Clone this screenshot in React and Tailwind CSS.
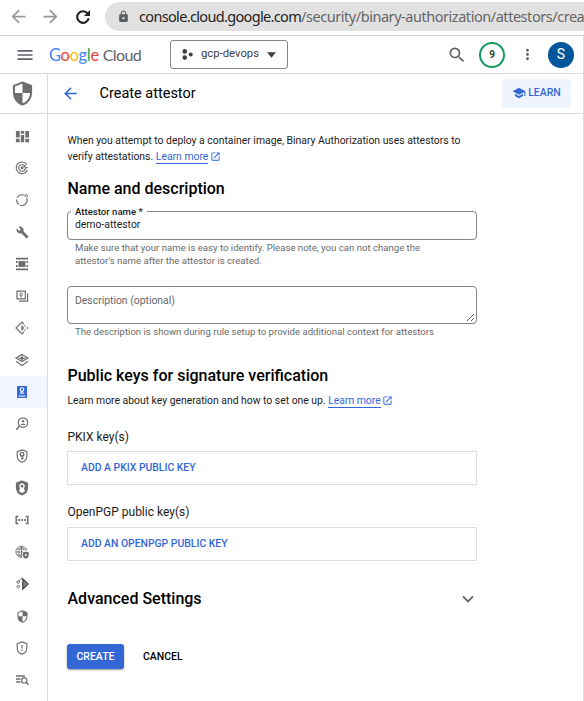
import React from "react";
import {
  MdArrowBack, MdArrowForward, MdLock, MdMenu, MdSearch, MdMoreVert,
  MdSchool, MdOpenInNew, MdBuild,
} from "react-icons/md";

const SHIELD = "M8 1 13.5 3.1V7.6C13.5 11 11.2 14 8 15 4.8 14 2.5 11 2.5 7.6V3.1Z";

function Icon({ children, className = "size-4" }) {
  return (
    <svg viewBox="0 0 16 16" className={className} fill="none" stroke="currentColor" strokeWidth="1.2">
      {children}
    </svg>
  );
}

function HalfShield({ className }) {
  return (
    <Icon className={className}>
      <path d={SHIELD} strokeWidth="1.3" />
      <path d="M8 1 13.5 3.1V7.6H8ZM8 7.6V15C4.8 14 2.5 11 2.5 7.6Z" fill="currentColor" stroke="none" />
    </Icon>
  );
}

const NAV = [
  <Icon key="overview" className="size-[15px]">
    <path d="M1 2h4v7H1zM6.2 2h3.6v3H6.2zM11 2h4v7h-4zM1 10.5h4V14H1zM6.2 6.5h3.6V14H6.2zM11 10.5h4V14h-4z" fill="currentColor" stroke="none" />
  </Icon>,
  <Icon key="threats">
    <path d="M12.6 4.2A5.8 5.8 0 1 0 13.4 10M14 7.800h-3" strokeWidth="1.1" />
    <circle cx="8" cy="8" r="3.3" strokeWidth="1.1" />
    <circle cx="8" cy="8" r="1.4" fill="currentColor" stroke="none" />
    <path d="m8 8 4.500-3.500" strokeWidth="1" />
  </Icon>,
  <Icon key="compliance">
    <path d="M10.500 3.300A5.300 5.300 0 0 0 3.200 6M2.700 7.300a5.300 5.300 0 0 0 2.400 5.200M6.100 13.200a5.300 5.300 0 0 0 6.700-6.900" strokeWidth="1.100" />
    <circle cx="12.3" cy="3.700" r="1.2" strokeWidth="1" />
  </Icon>,
  <MdBuild key="build" className="size-[13px]" />,
  <Icon key="assets">
    <path d="M2 2.6h12M2 13.4h12" strokeWidth="1.6" />
    <path d="M4.5 5h7v6h-7zM2 5h1.5v2H2zM12.5 5H14v2h-1.5zM2 9h1.5v2H2zM12.5 9H14v2h-1.5z" fill="currentColor" stroke="none" />
  </Icon>,
  <Icon key="findings">
    <path d="M3 3.2h8.3v7.6H3zM5 13.2h8.6V5.5" />
    <circle cx="7.1" cy="6.4" r="1.3" strokeWidth="1" />
    <path d="M7.1 7.8v1.7" />
  </Icon>,
  <Icon key="sources">
    <path d="M10 4 8 2 2 8l6 6 2-2" />
    <path d="M8 5.2v5.6M11 5v1.500M11 9.5v1.500M13.5 7v2" />
    <path d="m8 6 2.5 2L8 10Z" fill="currentColor" stroke="none" />
  </Icon>,
  <Icon key="posture">
    <path d="m8 2.4 6 3.6-6 3.6L2 6ZM2 9.3 8 13.4l6-4.1" />
    <path d="m8 3 1 2.400L13 6 9 7.2 8 9.5 7 7.2 3 6l4-.6Z" fill="currentColor" stroke="none" />
  </Icon>,
  <Icon key="binary">
    <path d="M4 2h8a1 1 0 0 1 1 1v7.4H3V3a1 1 0 0 1 1-1ZM3 10h10v4H3z" fill="currentColor" stroke="none" />
    <circle cx="8" cy="5.6" r="1.8" stroke="#fff" strokeWidth="1.1" />
    <path d="M8 7.3v1.700M5.7 9.1h4.6M4.5 12.1h7" stroke="#fff" strokeWidth="1" />
  </Icon>,
  <Icon key="risk">
    <circle cx="9" cy="6.6" r="4.7" />
    <path d="m5.6 10-3.4 3.8" strokeWidth="1.5" />
    <circle cx="9" cy="5.2" r="1.2" fill="currentColor" stroke="none" />
    <path d="M6.4 9C6.6 7.2 11.4 7.2 11.6 9Z" fill="currentColor" stroke="none" />
  </Icon>,
  <Icon key="key">
    <path d={SHIELD} strokeWidth="1.3" transform="translate(1 1) scale(.88)" />
    <circle cx="8" cy="6.2" r="1.800" strokeWidth="1.400" />
    <path d="M8 8v3.8M8 10h1.6" strokeWidth="1.300" />
  </Icon>,
  <Icon key="identity">
    <path d={SHIELD} fill="currentColor" />
    <path d="M8 3.200a2.900 2.900 0 0 1 1.900 5L11 11.300 8 13 5 11.300 6.100 8.200A2.900 2.900 0 0 1 8 3.200Z" fill="#fff" stroke="none" />
    <circle cx="8" cy="6.200" r="1.400" fill="currentColor" stroke="none" />
  </Icon>,
  <Icon key="secret">
    <path d="M4.3 4.6H2.2v7h2.1M11.7 4.6h2.1v7h-2.1" strokeWidth="1.5" />
    <path d="M4.200 8h8" strokeWidth="1.8" strokeDasharray="1.9 1.1" />
  </Icon>,
  <Icon key="web">
    <path d="M12.9 6.5A5.6 5.6 0 1 0 7.8 13.4M2 8h7M3 5h9.5M3 11h5M7.5 2.4v11M7.5 2.4C3.8 6 3.8 10 7.5 13.4M7.5 2.4c1.4 1.2 2.2 2.7 2.5 4.2" strokeWidth=".9" />
    <path d="m11.8 7.4 3 1.1v2.4c0 1.9-1.2 3.3-3 3.9-1.8-.6-3-2-3-3.9V8.500Z" fill="currentColor" stroke="none" />
    <circle cx="11.8" cy="11" r=".9" fill="#fff" stroke="none" />
  </Icon>,
  <Icon key="managed">
    <path d="M8.200 1.500 15 8l-6.800 6.500Z" fill="#444" stroke="none" />
    <path d="M9.500 4.500v7L13 8Z" fill="#8a8a8a" stroke="none" />
    <circle cx="4.200" cy="6" r="1.300" strokeWidth="1" />
    <circle cx="4.200" cy="10.600" r="1.300" strokeWidth="1" />
    <path d="m5.200 5 3-3.200" strokeWidth=".9" />
  </Icon>,
  <HalfShield key="access" className="size-[13px]" />,
  <Icon key="alert" className="size-[14px]">
    <path d={SHIELD} strokeWidth="1.3" />
    <path d="M8 4.700v3.800M8 9.800v1.500" strokeWidth="1.400" />
  </Icon>,
  <Icon key="audit">
    <path d="M2 4h9M2 7h4.500M2 10h4.500" strokeWidth="1.300" />
    <circle cx="10.200" cy="8.400" r="2.600" />
    <path d="m12 10.300 2.500 2.500" strokeWidth="1.400" />
  </Icon>,
];

function LearnMore() {
  return (
    <a className="inline-flex items-center gap-[1.5px] text-[#3367d6]">
      <span className="h-[15px] border-b border-[#3367d6] leading-[15px]">Learn more</span>
      <MdOpenInNew className="size-[11px]" />
    </a>
  );
}

export default function App() {
  return (
    <div className="flex h-[701px] w-[584px] flex-col overflow-hidden bg-white font-[Roboto,sans-serif] text-[#1b1b1b]">
      <div className="flex h-9 shrink-0 border-b border-[#d0d0d0] pt-[2px]">
        <div className="flex h-[29px] w-[105px] shrink-0 items-center pl-[8px] text-[#9a9a9a]">
          <MdArrowBack className="size-[21px]" />
          <MdArrowForward className="ml-[11px] size-[21px]" />
          <svg viewBox="0 0 14 14" className="ml-[15px] size-[14px] text-[#202124]" fill="none" stroke="currentColor" strokeWidth="2.100">
            <path d="M11.700 3.600A5.800 5.800 0 1 0 12.700 8.200" />
            <path d="M14 0v6H8Z" fill="currentColor" stroke="none" />
          </svg>
        </div>
        <div className="flex h-[29px] flex-1 items-center overflow-hidden rounded-l-full bg-[#e1e1e1] pl-3">
          <MdLock className="size-[13px] shrink-0 text-[#5a5d61]" />
          <div className="ml-[9px] whitespace-nowrap pb-[1px] font-['Noto_Sans',sans-serif] text-[14.5px] leading-5 tracking-[-0.66px] text-[#666]">
            <span className="text-[#222]">console.cloud.google.com</span><span className="tracking-[-0.46px]">/security/binary-authorization/attestors/crea</span>
          </div>
        </div>
      </div>

      <header className="flex h-[38px] shrink-0 items-center border-b border-r border-[#dcdcdc] text-[#5f6368]">
        <MdMenu className="ml-[15px] size-[20px]" />
        <div className="ml-[14px] flex w-[121px] gap-[4px] whitespace-nowrap font-[Lato,sans-serif] text-[16.5px] leading-5 tracking-[-0.35px]">
          <span>
            <span className="text-[#4285f4]">G</span><span className="text-[#ea4335]">o</span><span className="text-[#fbbc04]">o</span><span className="text-[#4285f4]">g</span><span className="text-[#34a853]">l</span><span className="text-[#ea4335]">e</span>
          </span>
          <span className="text-[16px] tracking-[-0.6px]">Cloud</span>
        </div>
        <button className="flex h-[29px] w-[118px] items-center rounded-[3px] border border-[#80868b] pl-[11px] text-[#3c4043]">
          <svg viewBox="0 0 12 12" className="size-[11px]" fill="currentColor">
            <circle cx="3" cy="2.600" r="2.500" /><circle cx="3" cy="9.400" r="2.500" /><circle cx="9.500" cy="6" r="2.200" />
          </svg>
          <span className="ml-2 text-[11.3px]">gcp-devops</span>
          <svg viewBox="0 0 10 6" className="ml-[8px] h-[6px] w-[9px]" fill="currentColor"><path d="M0 0h10L5 6Z" /></svg>
        </button>
        <MdSearch className="ml-[159px] size-[20px]" />
        <div className="ml-3 flex size-[26px] items-center justify-center rounded-full border-2 border-[#149c5d] text-[10px] font-bold text-[#174c2c]">9</div>
        <MdMoreVert className="ml-[14px] size-[17px]" />
        <div className="ml-3 flex size-[26px] items-center justify-center rounded-full bg-[#01579b] text-[14px] text-white">S</div>
      </header>

      <div className="flex min-h-0 flex-1 border-r border-[#dcdcdc]">
        <nav className="flex w-12 shrink-0 flex-col border-r border-[#dadada] text-[#6e6e6e]">
          <div className="mb-[6px] flex h-10 shrink-0 items-center justify-center border-b border-[#dadada] pr-[2px]">
            <HalfShield className="h-[25px] w-[27px]" />
          </div>
          {NAV.map((icon, i) => (
            <div key={i} className={`flex h-8 shrink-0 items-center justify-center pr-[3px] ${i === 8 ? "bg-[#f0f5ff] text-[#3367d6]" : ""}`}>
              {icon}
            </div>
          ))}
        </nav>

        <main className="flex min-w-0 flex-1 flex-col">
          <div className="flex h-10 shrink-0 items-center border-b border-[#dadada] pr-3">
            <MdArrowBack className="ml-[13px] size-[19px] text-[#3367d6]" />
            <h1 className="ml-[19.5px] text-[14.5px] text-black">Create attestor</h1>
            <button className="ml-auto flex h-[29px] w-[69px] items-center justify-center gap-[2px] rounded-[3px] bg-[#f0f4fe] pb-px text-[10.500px] font-medium text-[#3367d6]">
              <MdSchool className="size-[14px]" />LEARN
            </button>
          </div>

          <div className="ml-[19px] flex w-[410px] flex-col pt-[19px]">
            <p className="whitespace-nowrap pl-[0.5px] text-[10.4px] leading-4">
              When you attempt to deploy a container image, Binary Authorization uses attestors to<br />
              verify attestations. <LearnMore />
            </p>
            <h2 className="mt-[12px] pl-[0.5px] text-[16px] font-medium leading-6 text-black">Name and description</h2>
            <div className="relative mt-[10px] h-[29px] rounded-[4px] border border-[#80868b] pl-[7px] pt-[7px] text-[10.4px] leading-3">
              <label className="absolute left-[3px] top-[-6px] bg-white px-1 text-[9.6px] font-medium leading-3">Attestor name *</label>
              demo-attestor
            </div>
            <p className="mt-px whitespace-nowrap pl-2 text-[9.6px] leading-[13px] text-[#6b6b6b]">
              Make sure that your name is easy to identify. Please note, you can not change the<br />
              attestor's name after the attestor is created.
            </p>
            <div className="mt-[19px] flex h-[38px] justify-between rounded-[4px] border border-[#80868b] pl-[7px] pt-[8px] text-[10.4px] leading-3 text-[#666]">
              Description (optional)
              <svg viewBox="0 0 9 9" className="mb-px mr-[1px] size-[9px] self-end" stroke="#555" strokeWidth=".9"><path d="m1 8 7-7M5 8l3-3" /></svg>
            </div>
            <p className="mt-px whitespace-nowrap pl-2 text-[9.6px] leading-[13px] text-[#6b6b6b]">The description is shown during rule setup to provide additional context for attestors</p>
            <h2 className="mt-[26px] pl-[0.5px] text-[16px] font-medium leading-6 text-black">Public keys for signature verification</h2>
            <p className="mt-[5px] whitespace-nowrap pl-[0.5px] text-[10.4px] leading-4 tracking-[-0.01px]">
              Learn more about key generation and how to set one up. <LearnMore />
            </p>
            <h3 className="mt-5 pl-[0.5px] text-[12px] leading-4">PKIX key(s)</h3>
            <div className="mt-[6px] flex h-[34px] items-center border border-[#dfdfdf] pl-[13px] text-[10.4px] font-medium text-[#3367d6]">ADD A PKIX PUBLIC KEY</div>
            <h3 className="mt-[19px] pl-[0.5px] text-[12px] leading-4">OpenPGP public key(s)</h3>
            <div className="mt-[7px] flex h-[34px] items-center border border-[#dfdfdf] pl-[13px] text-[10.4px] font-medium text-[#3367d6]">ADD AN OPENPGP PUBLIC KEY</div>
            <div className="mt-[26px] flex h-6 items-center justify-between">
              <h2 className="pl-[0.5px] text-[16px] font-medium leading-6 text-black">Advanced Settings</h2>
              <svg viewBox="0 0 12 8" className="mr-[3px] h-2 w-3 text-[#5f6368]" fill="none" stroke="currentColor" strokeWidth="1.900"><path d="m1 1.300 5 5 5-5" /></svg>
            </div>
            <div className="mt-[33px] flex items-center text-[10.500px] font-medium">
              <button className="h-[25px] w-[57px] rounded-[3px] bg-[#3367d6] text-white shadow-[0_1px_2px_rgba(0,0,0,0.4)]">CREATE</button>
              <button className="ml-[19px] text-black">CANCEL</button>
            </div>
          </div>
        </main>
      </div>
    </div>
  );
}
